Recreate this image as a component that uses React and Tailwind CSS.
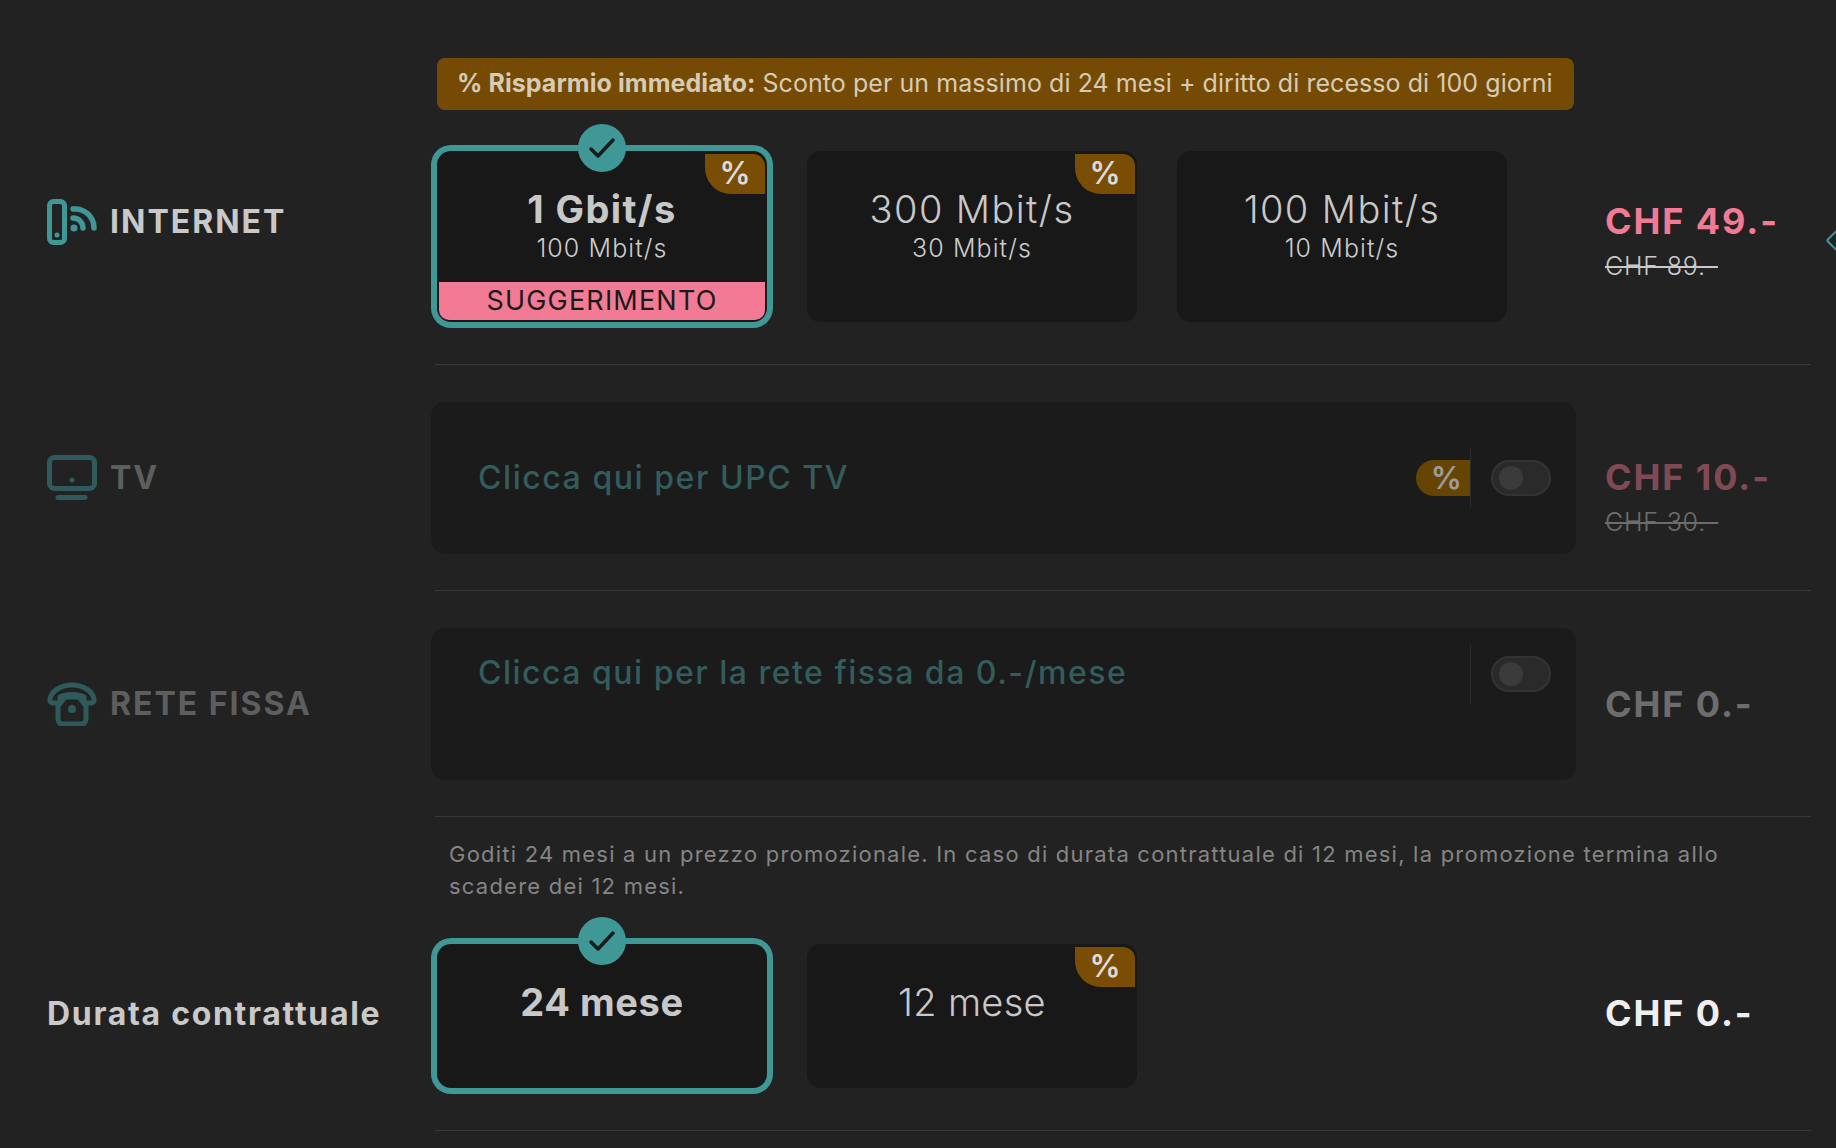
import React from "react";

const font = "font-['Inter','Liberation_Sans',sans-serif]";

const InternetIcon = () => (
  <svg width="50" height="46" viewBox="0 0 50 46" fill="none" stroke="#3f9896" strokeWidth="5" strokeLinecap="round">
    <rect x="2.5" y="2.5" width="15" height="41" rx="4" />
    <circle cx="10" cy="36" r="2.500" fill="#3f9896" stroke="none" />
    <circle cx="27" cy="29" r="3.500" fill="#3f9896" stroke="none" />
    <path d="M26 19a10 10 0 0 1 10 10" strokeWidth="5.500" />
    <path d="M26 10a19 19 0 0 1 21 19" strokeWidth="5.500" />
  </svg>
);

const TvIcon = () => (
  <svg width="50" height="46" viewBox="0 0 50 46" fill="none" stroke="#2f5a5b" strokeWidth="5" strokeLinecap="round">
    <rect x="2.5" y="2.5" width="45" height="31" rx="5" />
    <circle cx="25" cy="25" r="2.500" fill="#2f5a5b" stroke="none" />
    <path d="M11 42.5h27" />
  </svg>
);

const PhoneIcon = () => (
  <svg width="50" height="44" viewBox="0 0 50 44" fill="none" stroke="#2f5a5b" strokeWidth="5" strokeLinecap="round" strokeLinejoin="round">
    <path d="M10 21H6c-2 0-3.500-1.500-3-4 1-7 10-14 22-14s21 7 22 14c.5 2.500-1 4-3 4h-4c-2 0-3-1-3-3v-3c-3-1.500-7-2.500-12-2.500S16 13.500 13 15v3c0 2-1 3-3 3z" />
    <path d="M11 24v12c0 4 2 6 5 6h18c3 0 5-2 5-6V24l-7-9H18z" />
    <circle cx="25" cy="27" r="4" fill="#2f5a5b" stroke="none" />
  </svg>
);

const Check = () => (
  <div className="absolute left-1/2 top-[-27px] z-10 flex h-12 w-12 -translate-x-1/2 items-center justify-center rounded-full bg-[#3f9896]">
    <svg width="28" height="24" viewBox="0 0 28 24" fill="none" stroke="#1a1a1a" strokeWidth="3.500" strokeLinecap="round" strokeLinejoin="round">
      <path d="M3 13l7 7L25 4" />
    </svg>
  </div>
);

const Corner = () => (
  <div className="absolute right-[2px] top-[3px] flex h-10 w-[60px] items-center justify-center rounded-tr-[12px] rounded-bl-[26px] bg-[#7a4d05] pb-[2px] text-[31px] font-semibold text-[#dcdcdc]">
    %
  </div>
);

const Card = ({ title, sub, selected, promo, tag, tracking = "tracking-[1.4px]" }) => (
  <div
    className={`relative flex w-[330px] flex-col items-center rounded-[14px] bg-[#181818] ${
      selected ? "ring-[6px] ring-[#3f9896]" : ""
    }`}
  >
    {selected && <Check />}
    {promo && <Corner />}
    <div className={`mt-[36px] text-[38px] leading-[44px] text-[#c8c8c8] ${tracking} ${selected ? "font-bold" : "font-light"}`}>{title}</div>
    {sub && <div className="mt-[2px] text-[25px] leading-[30px] font-light tracking-[1.1px] text-[#cccccc]">{sub}</div>}
    {tag && (
      <div className="absolute bottom-[2px] left-[2px] right-[2px] flex h-[38px] items-center justify-center rounded-b-[10px] bg-[#f27a95] text-[27px] font-normal tracking-[1.2px] text-[#1a1a1a]">
        {tag}
      </div>
    )}
  </div>
);

const Toggle = () => (
  <div className="flex h-9 w-[60px] items-center rounded-full border-2 border-[#333] bg-[#2a2a2a] pl-[6px]">
    <div className="h-6 w-6 rounded-full bg-[#3b3b3b]" />
  </div>
);

const Price = ({ now, old, color }) => (
  <div className="flex flex-col">
    <div className={`text-[36px] leading-[40px] font-bold tracking-[1.9px] ${color}`}>{now}</div>
    {old && <div className="mt-[10px] text-[25px] leading-[30px] font-light tracking-[0.8px] text-[#c9c9c9] line-through">{old}</div>}
  </div>
);

const Divider = () => <div className="ml-[388px] h-px w-[1376px] bg-[#383838]" />;

const Label = ({ icon, children, color, tracking = "tracking-[2px]" }) => (
  <div className="flex w-[384px] items-center">
    {icon && <div className="mr-[13px] flex w-[50px] justify-center">{icon}</div>}
    <div className={`text-[32px] font-bold ${tracking} ${color}`}>{children}</div>
  </div>
);

export default function App() {
  return (
    <div className={`h-screen w-full overflow-hidden bg-[#222222] pl-[47px] ${font}`}>
      <div className="ml-[390px] mt-[58px] flex h-[52px] w-[1137px] items-center rounded-[8px] bg-[#754a04] pl-[20px] text-[25px] tracking-[0.06px] text-[#d6ccb5]">
        <b className="mr-[7px] font-bold">% Risparmio immediato:</b>
        Sconto per un massimo di 24 mesi + diritto di recesso di 100 giorni
      </div>

      <div className="mt-[41px] flex h-[171px]">
        <div className="flex h-[142px] items-center">
          <Label icon={<InternetIcon />} color="text-[#c9c9c9]">INTERNET</Label>
        </div>
        <div className="ml-[6px] flex gap-10">
          <Card title="1 Gbit/s" sub="100 Mbit/s" selected promo tag="SUGGERIMENTO" />
          <Card title="300 Mbit/s" sub="30 Mbit/s" promo />
          <Card title="100 Mbit/s" sub="10 Mbit/s" />
        </div>
        <div className="ml-[98px] mt-[50px]">
          <Price now="CHF 49.-" old="CHF 89.-" color="text-[#f27a95]" />
        </div>
      </div>
      <div className="h-[42px]" />
      <Divider />

      <div className="mt-[37px] flex h-[152px]">
        <Label icon={<TvIcon />} color="text-[#5e5e5e]">TV</Label>
        <div className="relative flex w-[1145px] items-center rounded-[14px] bg-[#1b1b1b] pl-[47px] text-[32px] font-medium tracking-[1.55px] text-[#335c5d]">
          Clicca qui per UPC TV
          <div className="absolute left-[985px] top-[46px] flex h-[60px] items-start">
            <div className="mt-[12px] flex h-9 w-[54px] items-center justify-center rounded-l-full bg-[#664403] pl-2 text-[31px] font-semibold text-[#9c9c9c]">%</div>
            <div className="h-[60px] w-px bg-[#2b2b2b]" />
            <div className="ml-[20px] mt-[12px]"><Toggle /></div>
          </div>
        </div>
        <div className="ml-[29px] mt-[55px] opacity-45">
          <Price now="CHF 10.-" old="CHF 30.-" color="text-[#f27a95]" />
        </div>
      </div>
      <div className="h-[36px]" />
      <Divider />

      <div className="mt-[37px] flex h-[152px]">
        <Label icon={<PhoneIcon />} color="text-[#5e5e5e]">RETE FISSA</Label>
        <div className="relative w-[1145px] rounded-[14px] bg-[#1b1b1b] pl-[47px] pt-[26px] text-[32px] leading-[38px] font-medium tracking-[1.5px] text-[#335c5d]">
          Clicca qui per la rete fissa da 0.-/mese
          <div className="absolute left-[1039px] top-[16px] flex h-[60px] items-start">
            <div className="h-[60px] w-px bg-[#2b2b2b]" />
            <div className="ml-[20px] mt-[12px]"><Toggle /></div>
          </div>
        </div>
        <div className="ml-[29px] flex items-center opacity-45">
          <Price now="CHF 0.-" color="text-[#c9c9c9]" />
        </div>
      </div>
      <div className="h-[36px]" />
      <Divider />

      <p className="ml-[402px] mt-[21px] w-[1300px] text-[22px] leading-[32px] tracking-[1.22px] text-[#858585]">
        Goditi 24 mesi a un prezzo promozionale. In caso di durata contrattuale di 12 mesi, la promozione termina allo scadere dei 12 mesi.
      </p>

      <div className="mt-[42px] flex h-[144px]">
        <div className="flex h-[140px] items-center">
          <Label color="text-[#c9c9c9]" tracking="tracking-[1.7px]">Durata contrattuale</Label>
        </div>
        <div className="ml-[6px] flex gap-10">
          <Card title="24 mese" selected tracking="tracking-[0.6px]" />
          <Card title="12 mese" promo tracking="tracking-[0.3px]" />
        </div>
        <div className="ml-[468px] flex h-[138px] items-center">
          <Price now="CHF 0.-" color="text-[#efefef]" />
        </div>
      </div>
      <div className="h-[42px]" />
      <Divider />

      <div className="absolute right-[-10px] top-[232px] h-[17px] w-[17px] rotate-45 rounded-[2px] border-2 border-[#3f9896]" />
    </div>
  );
}
